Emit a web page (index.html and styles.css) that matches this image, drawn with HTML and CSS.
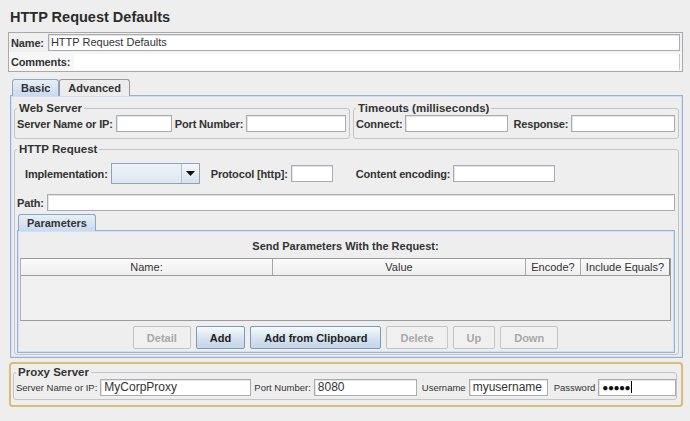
FILE: index.html
```html
<!DOCTYPE html>
<html>
<head>
<meta charset="utf-8">
<link rel="stylesheet" href="styles.css">
</head>
<body>
<div class="page">
  <h1 class="title">HTTP Request Defaults</h1>

  <div class="name-panel">
    <div class="name-row"><span class="lbl">Name:</span><div class="input grow">HTTP Request Defaults</div></div>
    <div class="comments-row"><span class="lbl">Comments:</span><div class="comments-field"></div></div>
  </div>

  <div class="tabs">
    <div class="tab active">Basic</div>
    <div class="tab">Advanced</div>
  </div>

  <div class="tab-panel">
    <div class="top-groups">
      <fieldset class="group">
        <legend>Web Server</legend>
        <div class="row">
          <span class="lbl">Server Name or IP:</span><div class="input w-server"></div>
          <span class="lbl">Port Number:</span><div class="input grow"></div>
        </div>
      </fieldset>
      <fieldset class="group">
        <legend>Timeouts (milliseconds)</legend>
        <div class="row">
          <span class="lbl">Connect:</span><div class="input w-connect"></div>
          <span class="lbl ml-resp">Response:</span><div class="input grow"></div>
        </div>
      </fieldset>
    </div>

    <fieldset class="group http">
      <legend>HTTP Request</legend>
      <div class="row impl-row">
        <span class="lbl">Implementation:</span>
        <div class="combo"><span class="combo-value"></span><span class="combo-btn"><svg width="9" height="5" viewBox="0 0 9 5"><path d="M0 0h9L4.5 5z" fill="#111"/></svg></span></div>
        <span class="lbl ml-proto">Protocol [http]:</span><div class="input w-proto"></div>
        <span class="lbl ml-enc">Content encoding:</span><div class="input w-enc"></div>
      </div>
      <div class="row path-row">
        <span class="lbl">Path:</span><div class="input grow"></div>
      </div>

      <div class="tabs params-tabs">
        <div class="tab active">Parameters</div>
      </div>
      <div class="params-panel">
        <div class="params-caption">Send Parameters With the Request:</div>
        <div class="table">
          <div class="thead">
            <div class="th c-name">Name:</div>
            <div class="th c-value">Value</div>
            <div class="th c-enc">Encode?</div>
            <div class="th c-eq">Include Equals?</div>
          </div>
          <div class="tbody"></div>
        </div>
        <div class="buttons">
          <button class="btn disabled">Detail</button>
          <button class="btn primary">Add</button>
          <button class="btn primary">Add from Clipboard</button>
          <button class="btn disabled">Delete</button>
          <button class="btn disabled">Up</button>
          <button class="btn disabled">Down</button>
        </div>
      </div>
    </fieldset>
  </div>

  <div class="proxy">
    <fieldset class="group proxy-group">
      <legend>Proxy Server</legend>
      <div class="row proxy-row">
        <span class="plbl">Server Name or IP:</span><div class="input pinput w-pserver">MyCorpProxy</div>
        <span class="plbl">Port Number:</span><div class="input pinput w-pport">8080</div>
        <span class="plbl ml-user">Username</span><div class="input pinput w-puser">myusername</div>
        <span class="plbl ml-pass">Password</span><div class="input pinput grow"><span class="dots">●●●●●</span><span class="caret"></span></div>
      </div>
    </fieldset>
  </div>
</div>
</body>
</html>
```

FILE: styles.css
```css
* { box-sizing: border-box; }

body {
  margin: 0;
  background: #eeeeee;
  font-family: "Liberation Sans", Arial, sans-serif;
  font-size: 11px;
  color: #262626;
}

.page {
  padding: 8px 7px 0 8px;
}

.title {
  margin: 0 0 6px 2px;
  font-size: 14.5px;
  line-height: 18px;
  font-weight: bold;
  color: #2b2b2b;
}

.lbl {
  font-weight: bold;
  white-space: nowrap;
  color: #333;
  letter-spacing: -0.15px;
}

.input {
  height: 17px;
  background: #fff;
  border: 1px solid #a9adb3;
  box-shadow: inset 1px 1px 0 #e3e3e3;
  padding: 0 2px;
  line-height: 15px;
  white-space: nowrap;
  overflow: hidden;
  color: #333;
}

.grow { flex: 1; min-width: 0; }

/* Name panel */
.name-panel {
  border: 1px solid #a9a9a9;
  background: #f0f0f0;
}

.name-row {
  display: flex;
  align-items: center;
  gap: 4px;
  height: 19px;
  padding: 0 2px;
}

.comments-row {
  display: flex;
  align-items: center;
  gap: 4px;
  height: 19px;
  padding: 0 2px;
  background: #f7f7f7;
}

.comments-field {
  flex: 1;
  height: 16px;
  background: #fff;
  border-right: 1px solid #c8c8c8;
}

/* Tabs */
.tabs {
  display: flex;
  margin: 7px 0 0 4px;
  height: 16px;
}

.tab {
  height: 17px;
  padding: 0 8px;
  border: 1px solid #9a9a9a;
  border-bottom: none;
  border-radius: 3px 3px 0 0;
  font-weight: bold;
  line-height: 16px;
  background: #ececec;
  color: #333;
}

.tab.active {
  background: linear-gradient(#e6eff9, #c8daee);
  border-color: #8aa5c8;
  position: relative;
  z-index: 1;
}

.tab-panel {
  margin-left: 2px;
  border: 1px solid #98b2d6;
  box-shadow: inset 0 0 0 1px #d3e0f1;
  padding: 5px 3px 2px 3px;
}

.top-groups {
  display: grid;
  grid-template-columns: 336px 1fr;
  gap: 3px;
}

fieldset.group {
  margin: 0;
  min-width: 0;
  padding: 0 3px 6px 2px;
  border: 1px solid #c4c4c4;
  border-radius: 3px;
}

fieldset.group legend {
  padding: 0 2px;
  font-weight: bold;
  font-size: 11.5px;
  line-height: 14px;
  color: #333;
}

.row {
  display: flex;
  align-items: center;
  gap: 3px;
  height: 17px;
}

.w-server { width: 56px; }
.w-connect { width: 103px; }
.ml-resp { margin-left: 2px; }

/* HTTP Request */
fieldset.http {
  margin-top: 3px;
  padding: 0 3px 1px 2px;
}

.impl-row {
  margin-top: 7px;
  height: 21px;
  padding-left: 8px;
}

.combo {
  display: flex;
  width: 89px;
  height: 21px;
  border: 1px solid #8da2bd;
  background: linear-gradient(#eef2f7, #dfe7f0);
}

.combo-value { flex: 1; }

.combo-btn {
  width: 18px;
  display: flex;
  align-items: center;
  justify-content: center;
  border-left: 1px solid #b5c3d4;
  background: linear-gradient(#f4f7fb, #d7e1ec);
}

.ml-proto { margin-left: 8px; }
.w-proto { width: 42px; }
.ml-enc { margin-left: 20px; }
.w-enc { width: 102px; }

.path-row {
  margin-top: 10px;
}

.params-tabs {
  margin: 3px 0 0 1px;
}

.params-panel {
  border: 1px solid #98b2d6;
  box-shadow: inset 0 0 0 1px #d3e0f1;
  padding: 3px 3px 3px 2px;
}

.params-caption {
  height: 24px;
  line-height: 24px;
  text-align: center;
  font-weight: bold;
  color: #333;
}

.table {
  border: 1px solid #9c9c9c;
  border-left-color: #b0b0b0;
}

.thead {
  display: grid;
  grid-template-columns: 252px 253px 55px 1fr;
  height: 17px;
  border-bottom: 1px solid #9c9c9c;
  background: linear-gradient(#fbfbfb, #efefef);
}

.th {
  text-align: center;
  line-height: 16px;
  color: #333;
  border-right: 1px solid #a8a8a8;
}

.th.c-eq { border-right: 1px solid #808080; }

.tbody {
  height: 44px;
  background: #f0f0f0;
}

.buttons {
  display: flex;
  justify-content: center;
  gap: 5px;
  margin-top: 5px;
}

.btn {
  height: 23px;
  padding: 0 13px;
  font-family: "Liberation Sans", Arial, sans-serif;
  font-size: 11px;
  font-weight: bold;
  border-radius: 2px;
}

.btn.primary {
  border: 1px solid #7e9aba;
  background: linear-gradient(#f7fafd, #d3e0ee 60%, #c5d6e9);
  color: #1e1e1e;
}

.btn.disabled {
  border: 1px solid #c4c4c4;
  background: #f0f0f0;
  color: #a8a8a8;
}

/* Proxy */
.proxy {
  margin: 4px 0 0 1px;
  border: 2px solid #d8bf76;
  border-radius: 4px;
  padding: 1px 4px 5px 2px;
  box-shadow: 0 0 1px #e8d7a6;
}

fieldset.proxy-group {
  padding: 0 0 3px 2px;
}

.proxy-row { gap: 3px; }

.plbl {
  font-size: 9.5px;
  color: #333;
  white-space: nowrap;
}

.pinput {
  font-size: 12px;
  line-height: 15px;
  padding-left: 3px;
}

.w-pserver { width: 151px; }
.w-pport { width: 103px; }
.w-puser { width: 79px; }
.ml-user { margin-left: 2px; }
.ml-pass { margin-left: 3px; }

.dots {
  font-size: 10px;
  letter-spacing: -0.5px;
  color: #111;
  vertical-align: top;
  line-height: 15px;
}

.caret {
  display: inline-block;
  width: 1px;
  height: 12px;
  margin-top: 1px;
  margin-left: 1px;
  background: #000;
  vertical-align: top;
}
```
